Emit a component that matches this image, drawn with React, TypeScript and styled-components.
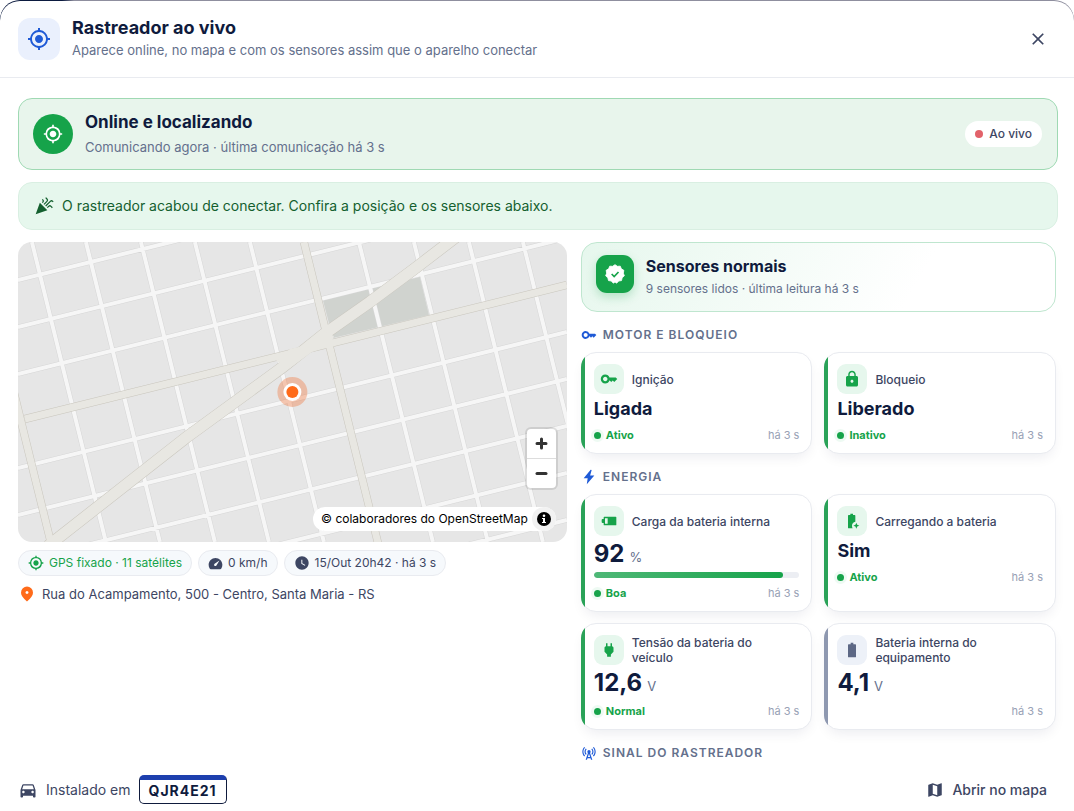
import React from "react";
import styled, { createGlobalStyle } from "styled-components";
import {
  MdCelebration,
  MdCellTower,
  MdClose,
  MdDirectionsCar,
  MdKey,
  MdLock,
  MdMap,
  MdMyLocation,
  MdPower,
  MdWatchLater,
} from "react-icons/md";

const color = {
  ink: "#0f1b3d",
  text: "#3d4663",
  muted: "#64708c",
  faint: "#98a1b5",
  green: "#16a34a",
  blue: "#1f5ad6",
  orange: "#ff6b1a",
  line: "#e9ebf0",
};

const GlobalStyle = createGlobalStyle`
  *, *::before, *::after { box-sizing: border-box; }
  body {
    margin: 0;
    background: #fff;
    color: ${color.text};
    font-family: Inter, "Liberation Sans", sans-serif;
    font-size: 13px;
    line-height: 20px;
    overflow: hidden;
  }
  h1, h2, h3, p { margin: 0; }
  button { font: inherit; color: inherit; border: 0; background: none; padding: 0; cursor: pointer; }
  svg { display: block; flex: none; }
`;

const Backdrop = styled.div`
  height: 100vh;
  padding-top: 1px;
  border-radius: 20px;
  overflow: hidden;
  background: linear-gradient(90deg, #0b1a3f 0, #0b1a3f 62px, #8f8f9f 74px, #8f8f9f 100%) 0 0 / 100% 40px no-repeat;
`;

const Dialog = styled.div`
  height: 100%;
  display: flex;
  flex-direction: column;
  border-radius: 20px;
  overflow: hidden;
  background: #fff;
`;

const Header = styled.header`
  display: flex;
  align-items: center;
  gap: 12px;
  padding: 17px 26px 17px 18px;
  border-bottom: 1px solid ${color.line};
`;

const HeaderIcon = styled.div`
  display: grid;
  place-items: center;
  width: 42px;
  height: 42px;
  border-radius: 12px;
  background: #eaf0fd;
  color: ${color.blue};
`;

const Grow = styled.div`
  flex: 1;
  min-width: 0;
`;

const Title = styled.h1`
  font-size: 18px;
  line-height: 20px;
  font-weight: 700;
  color: ${color.ink};
`;

const Subtitle = styled.p`
  line-height: 20px;
  color: ${color.muted};
  padding-top: 2px;
`;

const CloseButton = styled.button`
  display: grid;
  place-items: center;
  width: 20px;
  height: 20px;
`;

const Body = styled.main`
  flex: 1;
  min-height: 0;
  overflow: hidden;
  display: flex;
  flex-direction: column;
  gap: 12px;
  padding: 20px 16px 0 18px;
`;

const StatusBanner = styled.section`
  display: flex;
  align-items: center;
  gap: 12px;
  padding: 12px 15px 12px 14px;
  border: 1px solid #9fd9b3;
  border-radius: 14px;
  background: #e8f5ec;
`;

const StatusIcon = styled.div`
  display: grid;
  place-items: center;
  width: 40px;
  height: 40px;
  border-radius: 50%;
  background: ${color.green};
  color: #fff;
`;

const BannerTitle = styled.h2`
  font-size: 17px;
  line-height: 22px;
  font-weight: 700;
  color: ${color.ink};
`;

const BannerText = styled.p`
  padding-top: 4px;
  line-height: 20px;
  color: ${color.muted};
`;

const LivePill = styled.span`
  display: flex;
  align-items: center;
  gap: 6px;
  height: 26px;
  padding: 0 10px;
  border-radius: 13px;
  background: #fff;
  font-size: 12px;
  font-weight: 500;
`;

const Dot = styled.i<{ $color: string; $glow?: boolean }>`
  width: 8px;
  height: 8px;
  border-radius: 50%;
  background: ${(p) => p.$color};
  ${(p) => p.$glow && "width: 7px; height: 7px; box-shadow: 0 0 0 3px #eefaf3;"}
`;

const Notice = styled.p`
  display: flex;
  align-items: center;
  gap: 8px;
  padding: 13px 15px;
  border: 1px solid #d9efe2;
  border-radius: 14px;
  background: #e6f7ed;
  color: #14602f;
  font-size: 14px;
`;

const Columns = styled.div`
  display: grid;
  grid-template-columns: 1.15fr 1fr;
  gap: 14px;
`;

const MapFrame = styled.div`
  position: relative;
  height: 300px;
  border-radius: 14px;
  overflow: hidden;
  background: #e6e6e6;

  > svg { width: 100%; height: 100%; }
`;

const ZoomControl = styled.div`
  position: absolute;
  right: 11px;
  bottom: 54px;
  width: 29px;
  border-radius: 4px;
  background: #fff;
  box-shadow: 0 0 0 2px rgba(0, 0, 0, 0.1);
`;

const ZoomButton = styled.button`
  display: grid;
  place-items: center;
  width: 29px;
  height: 29px;

  & + & {
    height: 30px;
    border-top: 1px solid #ddd;
  }
`;

const Attribution = styled.div`
  position: absolute;
  right: 11px;
  bottom: 11px;
  display: flex;
  align-items: center;
  gap: 4px;
  height: 24px;
  padding-left: 8px;
  border-radius: 12px;
  background: #fff;
  color: #000;
  font-size: 12px;
`;

const InfoButton = styled.button`
  display: grid;
  place-items: center;
  width: 24px;
  height: 24px;
  border-radius: 50%;
  background: #f2f2f2;
`;

const Chips = styled.div`
  display: flex;
  flex-wrap: wrap;
  gap: 6px;
  padding-top: 8px;
`;

const Chip = styled.span<{ $ok?: boolean }>`
  display: flex;
  align-items: center;
  gap: 5px;
  height: 26px;
  padding: 0 9px;
  border: 1px solid ${color.line};
  border-radius: 13px;
  background: #f6f9fc;
  font-size: 12px;
  color: ${(p) => (p.$ok ? color.green : color.text)};
`;

const Address = styled.p`
  display: flex;
  align-items: center;
  gap: 6px;
  padding-top: 8px;
`;

const Sensors = styled.div`
  padding-right: 2px;
`;

const Summary = styled.section`
  display: flex;
  align-items: flex-start;
  gap: 12px;
  padding: 12px 14px;
  border: 1px solid #bfe6cf;
  border-radius: 16px;
  background: linear-gradient(120deg, #e6f7ed 0%, #fff 70%);
`;

const SummaryIcon = styled.div`
  display: grid;
  place-items: center;
  width: 38px;
  height: 38px;
  border-radius: 11px;
  background: ${color.green};
  color: #fff;
  box-shadow: 0 4px 10px rgba(22, 163, 74, 0.25);
`;

const SummaryTitle = styled.h2`
  font-size: 16px;
  line-height: 22px;
  font-weight: 700;
  color: ${color.ink};
`;

const SummaryText = styled.p`
  padding-top: 2px;
  font-size: 12px;
  color: ${color.muted};
`;

const GroupTitle = styled.h3`
  display: flex;
  align-items: center;
  gap: 6px;
  height: 40px;
  padding: 16px 0 10px;
  font-size: 12px;
  line-height: 14px;
  font-weight: 600;
  letter-spacing: 1px;
  text-transform: uppercase;
  color: ${color.muted};

  svg { color: ${color.blue}; }
`;

const Cards = styled.div`
  display: grid;
  grid-template-columns: 1fr 1fr;
  gap: 11px 12px;
`;

const Card = styled.article<{ $idle?: boolean }>`
  position: relative;
  display: flex;
  flex-direction: column;
  padding: 11px 12px 10px;
  border: 1px solid ${color.line};
  border-radius: 15px;
  background: #fff;
  box-shadow: 0 6px 14px -4px rgba(15, 27, 61, 0.09);

  &::before {
    content: "";
    position: absolute;
    inset: -1px;
    border-radius: 15px;
    background: linear-gradient(${(p) => (p.$idle ? "#8e98b0, #8e98b0" : "#2aa258, #2aa258")}) 0 0 / 4px 100% no-repeat;
    pointer-events: none;
  }
`;

const CardHead = styled.div`
  display: flex;
  align-items: center;
  gap: 8px;
  height: 30px;
  padding-right: 12px;
  font-size: 12px;
  line-height: 15px;
  font-weight: 500;
`;

const CardIcon = styled.div<{ $idle?: boolean }>`
  flex: none;
  display: grid;
  place-items: center;
  width: 30px;
  height: 30px;
  border-radius: 9px;
  background: ${(p) => (p.$idle ? "#edf1f8" : "#e6f7ed")};
  color: ${(p) => (p.$idle ? "#5d6885" : color.green)};
`;

const Value = styled.p<{ $large?: boolean }>`
  display: flex;
  align-items: baseline;
  gap: 5px;
  height: ${(p) => (p.$large ? 27 : 22)}px;
  margin-top: 4px;
  font-size: ${(p) => (p.$large ? 24 : 18)}px;
  line-height: ${(p) => (p.$large ? 27 : 22)}px;
  font-weight: 700;
  color: ${color.ink};

  small {
    font-size: 13px;
    line-height: 16px;
    font-weight: 400;
    color: ${color.muted};
  }
`;

const Meter = styled.div`
  height: 6px;
  margin-top: 5px;
  border-radius: 3px;
  background: #eceef3;
  overflow: hidden;
`;

const MeterFill = styled.div`
  height: 100%;
  border-radius: 3px;
  background: linear-gradient(90deg, #4fb877, #16a34a);
`;

const CardFoot = styled.div`
  display: flex;
  align-items: center;
  gap: 5px;
  margin-top: 7px;
  font-size: 11px;
  line-height: 16px;

  b { font-weight: 700; color: ${color.green}; }
  time { margin-left: auto; color: ${color.faint}; }
`;

const Footer = styled.footer`
  display: flex;
  align-items: center;
  justify-content: space-between;
  height: 43px;
  padding: 0 27px 0 18px;
  font-size: 14px;
`;

const Installed = styled.div`
  display: flex;
  align-items: center;
  gap: 8px;
`;

const Plate = styled.span`
  height: 29px;
  padding: 0 9px;
  border: 1px solid ${color.ink};
  border-top: 5px solid #1d3fae;
  border-radius: 5px;
  background: #fff;
  color: ${color.ink};
  line-height: 22px;
  font-weight: 700;
  letter-spacing: 1px;
`;

const MapLink = styled.a`
  display: flex;
  align-items: center;
  gap: 8px;
  color: ${color.text};
  font-weight: 500;
  text-decoration: none;
`;

type GlyphProps = { size?: number; children: React.ReactNode };

const Glyph = ({ size = 16, children }: GlyphProps) => (
  <svg width={size} height={size} viewBox="0 0 24 24" fill="currentColor" fillRule="evenodd" aria-hidden="true">
    {children}
  </svg>
);

const BoltIcon = () => (
  <Glyph>
    <path d="M14.5 1 4 13.8h6L8.7 23 20 9.6h-6.3L16 1.6z" />
  </Glyph>
);

const BatteryLevelIcon = () => (
  <Glyph>
    <path d="M5 5.5h17q1 0 1 1v11q0 1-1 1H5q-1 0-1-1V15H2.500Q1 15 1 13.500v-3Q1 9 2.500 9H4V6.500q0-1 1-1zM6 8v8h4V8z" />
  </Glyph>
);

const BatteryChargingIcon = () => (
  <Glyph>
    <path d="M9.500 1h4v2H16q1 0 1 1v9.200q-5 1-5 6.300 0 2 1 3.500H7q-1 0-1-1V4q0-1 1-1h2.500z" />
    <path d="m18.500 14.500 1.300 3.200 3.200 1.300-3.200 1.300-1.300 3.200-1.300-3.200L14 19l3.200-1.300z" />
  </Glyph>
);

const BatteryFullIcon = () => (
  <Glyph>
    <path d="M10 1h4v2.500h3q1 0 1 1V22q0 1-1 1H7q-1 0-1-1V4.500q0-1 1-1h3z" />
  </Glyph>
);

const GaugeIcon = () => (
  <Glyph size={15}>
    <path d="M4.500 21q-1.200 0-1.800-1A11.800 11.800 0 0 1 1 14C1 7.700 6 3 12 3s11 4.700 11 11c0 2.200-.6 4.200-1.700 6q-.6 1-1.800 1zM18.300 7.300l-7.700 5q-1.800 1.500-.4 3.200 1.700 1.500 3.300-.4z" />
  </Glyph>
);

const SealIcon = () => (
  <Glyph size={20}>
    <path
      d="M12 .8 14.900 2.800 18.300 2.600 19.600 5.800 22.600 7.600 22 11l1.200 3.200-2.600 2.300-.8 3.400-3.400.5-2.400 2.600L12 21.600 10 23l-2.400-2.600-3.400-.5-.8-3.400L.8 14.200 2 11 1.400 7.600l3-1.800L5.700 2.600l3.400.2z"
      stroke="currentColor"
      strokeWidth="1"
      strokeLinejoin="round"
    />
    <path d="m8 12 3 3 5.200-5.400" fill="none" stroke={color.green} strokeWidth="2" />
  </Glyph>
);

const PinIcon = () => (
  <svg width="18" height="18" viewBox="0 0 24 24" fill={color.orange} aria-hidden="true">
    <path d="M12 12q.825 0 1.413-.587T14 10t-.587-1.412T12 8t-1.412.588T10 10t.588 1.413T12 12m0 10q-4.025-3.425-6.012-6.362T4 10.200q0-3.750 2.413-5.975T12 2t5.588 2.225T20 10.200q0 2.500-1.987 5.438T12 22" />
  </svg>
);

const crossStreets = [280, 327, 374, 468, 515, 562, 609, 656];
const sideStreets = [32, 86, 141, 195, 250, 359, 414, 469, 523];
const avenues = "M25 419 567 285M-23 242 57 567M304 242 384 567";
const diagonal = "M48 546 187 437 283 367 323 335 370 302 413 270 460 234";

const StreetMap = () => {
  const streets = [
    ...crossStreets.map((y) => `M18 ${y}L567 ${y - 136}`),
    ...sideStreets.map((x) => `M${x} 242l74 300`),
  ].join("");
  return (
    <svg viewBox="18 242 549 300" preserveAspectRatio="xMidYMid slice" fill="none" role="img" aria-label="Mapa">
      <path d="M323 300 420 277 429 315 333 338z" fill="#d0d3cf" />
      <path d={streets} stroke="#d6d6d6" strokeWidth="5" />
      <path d={streets} stroke="#f6f6f6" strokeWidth="4" />
      <path d={avenues} stroke="#c9c6bd" strokeWidth="8" />
      <path d={diagonal} stroke="#c9c6bd" strokeWidth="12" />
      <path d={avenues} stroke="#e8e7e2" strokeWidth="7" />
      <path d={diagonal} stroke="#e8e7e2" strokeWidth="11" />
      <path
        d="M276 361 290 349 303 346 323 331 334 336 331 345 312 352 290 368z"
        fill="#e8e7e2"
      />
      <circle cx="292.500" cy="392" r="15" fill="#f26a2c" opacity=".35" />
      <circle cx="292.500" cy="392" r="9" fill="#fff" />
      <circle cx="292.500" cy="392" r="6" fill={color.orange} />
    </svg>
  );
};

type SensorProps = {
  icon: React.ReactNode;
  name: string;
  value: string;
  unit?: string;
  status?: string;
  level?: number;
};

const Sensor = ({ icon, name, value, unit, status, level }: SensorProps) => (
  <Card $idle={!status}>
    <CardHead>
      <CardIcon $idle={!status}>{icon}</CardIcon>
      {name}
    </CardHead>
    <Value $large={!!unit}>
      {value}
      {unit && <small>{unit}</small>}
    </Value>
    {level !== undefined && (
      <Meter>
        <MeterFill style={{ width: `${level}%` }} />
      </Meter>
    )}
    <CardFoot>
      {status && (
        <>
          <Dot $color={color.green} $glow />
          <b>{status}</b>
        </>
      )}
      <time>há 3 s</time>
    </CardFoot>
  </Card>
);

export default function App() {
  return (
    <>
      <GlobalStyle />
      <Backdrop>
        <Dialog role="dialog" aria-labelledby="dialog-title">
          <Header>
            <HeaderIcon>
              <MdMyLocation size={24} />
            </HeaderIcon>
            <Grow>
              <Title id="dialog-title">Rastreador ao vivo</Title>
              <Subtitle>Aparece online, no mapa e com os sensores assim que o aparelho conectar</Subtitle>
            </Grow>
            <CloseButton aria-label="Fechar">
              <MdClose size={20} />
            </CloseButton>
          </Header>

          <Body>
            <StatusBanner>
              <StatusIcon>
                <MdMyLocation size={20} />
              </StatusIcon>
              <Grow>
                <BannerTitle>Online e localizando</BannerTitle>
                <BannerText>Comunicando agora · última comunicação há 3 s</BannerText>
              </Grow>
              <LivePill>
                <Dot $color="#e2626a" />
                Ao vivo
              </LivePill>
            </StatusBanner>

            <Notice>
              <MdCelebration size={20} />
              O rastreador acabou de conectar. Confira a posição e os sensores abaixo.
            </Notice>

            <Columns>
              <section>
                <MapFrame>
                  <StreetMap />
                  <ZoomControl>
                    <ZoomButton aria-label="Aproximar">
                      <svg width="13" height="13" viewBox="0 0 13 13" stroke="#333" strokeWidth="3" strokeLinecap="round">
                        <path d="M2 6.500h9M6.500 2v9" />
                      </svg>
                    </ZoomButton>
                    <ZoomButton aria-label="Afastar">
                      <svg width="13" height="13" viewBox="0 0 13 13" stroke="#333" strokeWidth="3" strokeLinecap="round">
                        <path d="M2 6.500h9" />
                      </svg>
                    </ZoomButton>
                  </ZoomControl>
                  <Attribution>
                    © colaboradores do OpenStreetMap
                    <InfoButton aria-label="Créditos do mapa">
                      <svg width="14" height="14" viewBox="0 0 14 14">
                        <circle cx="7" cy="7" r="7" />
                        <path d="M5 6h3v4h1v1H5v-1h1V7H5z" fill="#fff" />
                        <circle cx="7" cy="3.700" r="1.300" fill="#fff" />
                      </svg>
                    </InfoButton>
                  </Attribution>
                </MapFrame>
                <Chips>
                  <Chip $ok>
                    <MdMyLocation size={16} />
                    GPS fixado · 11 satélites
                  </Chip>
                  <Chip>
                    <GaugeIcon />0 km/h
                  </Chip>
                  <Chip>
                    <MdWatchLater size={16} />
                    15/Out 20h42 · há 3 s
                  </Chip>
                </Chips>
                <Address>
                  <PinIcon />
                  Rua do Acampamento, 500 - Centro, Santa Maria - RS
                </Address>
              </section>

              <Sensors>
                <Summary>
                  <SummaryIcon>
                    <SealIcon />
                  </SummaryIcon>
                  <Grow>
                    <SummaryTitle>Sensores normais</SummaryTitle>
                    <SummaryText>9 sensores lidos · última leitura há 3 s</SummaryText>
                  </Grow>
                </Summary>

                <GroupTitle>
                  <MdKey size={16} />
                  Motor e bloqueio
                </GroupTitle>
                <Cards>
                  <Sensor icon={<MdKey size={18} />} name="Ignição" value="Ligada" status="Ativo" />
                  <Sensor icon={<MdLock size={18} />} name="Bloqueio" value="Liberado" status="Inativo" />
                </Cards>

                <GroupTitle>
                  <BoltIcon />
                  Energia
                </GroupTitle>
                <Cards>
                  <Sensor
                    icon={<BatteryLevelIcon />}
                    name="Carga da bateria interna"
                    value="92"
                    unit="%"
                    level={92}
                    status="Boa"
                  />
                  <Sensor icon={<BatteryChargingIcon />} name="Carregando a bateria" value="Sim" status="Ativo" />
                  <Sensor
                    icon={<MdPower size={18} />}
                    name="Tensão da bateria do veículo"
                    value="12,6"
                    unit="V"
                    status="Normal"
                  />
                  <Sensor icon={<BatteryFullIcon />} name="Bateria interna do equipamento" value="4,1" unit="V" />
                </Cards>

                <GroupTitle>
                  <MdCellTower size={16} />
                  Sinal do rastreador
                </GroupTitle>
              </Sensors>
            </Columns>
          </Body>

          <Footer>
            <Installed>
              <MdDirectionsCar size={20} />
              Instalado em
              <Plate>QJR4E21</Plate>
            </Installed>
            <MapLink href="#mapa">
              <MdMap size={18} />
              Abrir no mapa
            </MapLink>
          </Footer>
        </Dialog>
      </Backdrop>
    </>
  );
}
